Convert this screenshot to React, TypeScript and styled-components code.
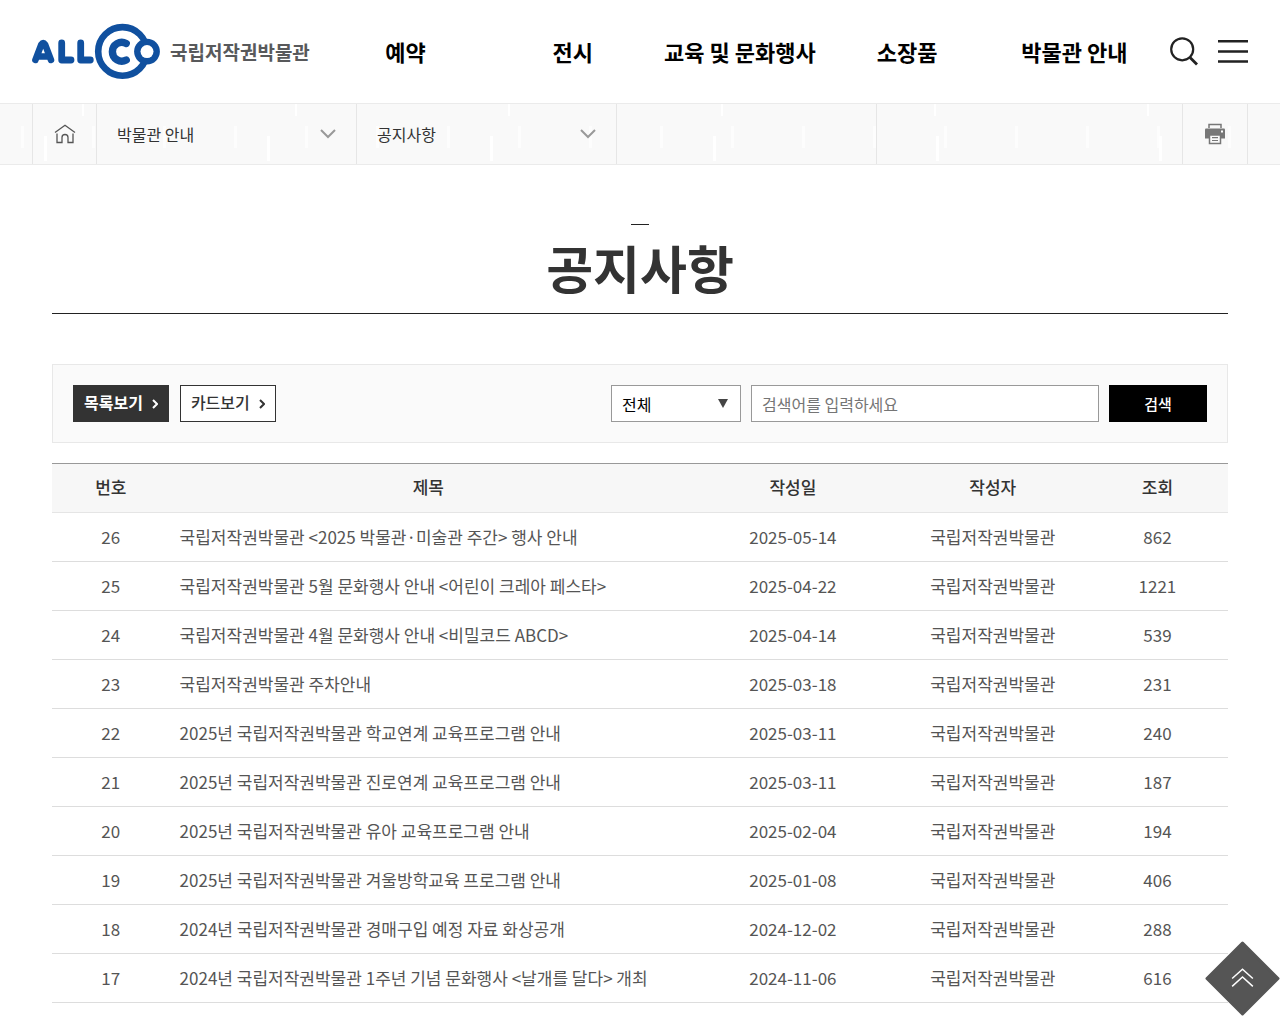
import React from "react";
import styled, { createGlobalStyle, css } from "styled-components";

const GlobalStyle = createGlobalStyle`
  *, *::before, *::after { box-sizing: border-box; }
  body {
    margin: 0;
    background: #fff;
    color: #333;
    font-family: "Noto Sans CJK KR", "Noto Sans", sans-serif;
    font-size: 16px;
    line-height: 24px;
  }
  a { color: inherit; text-decoration: none; }
  button, input, select { font: inherit; border-radius: 0; margin: 0; }
  button { cursor: pointer; }
`;

const Header = styled.header`
  display: flex;
  align-items: center;
  height: 103px;
  padding: 0 32px;
`;

const LogoLink = styled.a`
  display: flex;
  align-items: center;
  gap: 10px;
  flex: none;
  color: #58595b;
  font-size: 19px;
  font-weight: 700;
  white-space: nowrap;
`;

const Nav = styled.nav`
  flex: 1;
  margin: 0 12px;
  padding-bottom: 2px;
`;

const NavList = styled.ul`
  display: grid;
  grid-template-columns: repeat(5, 1fr);
  margin: 0;
  padding: 0;
  list-style: none;
  text-align: center;
`;

const NavLink = styled.a`
  color: #000;
  font-size: 22px;
  font-weight: 700;
  line-height: 32px;
  white-space: nowrap;
`;

const Tools = styled.div`
  display: flex;
  align-items: center;
  gap: 20px;
`;

const IconButton = styled.button`
  display: flex;
  padding: 0;
  border: 0;
  background: none;
  color: #222;
`;

const PathBar = styled.nav`
  display: flex;
  height: 62px;
  padding: 0 32px;
  border: solid #ebebeb;
  border-width: 1px 0;
  background:
    linear-gradient(90deg, transparent 82px, #fff 82px 84px, transparent 84px) 0 0 / 213px 12px repeat-x,
    linear-gradient(90deg, transparent 44px, #fff 44px 47px, transparent 47px) 0 32px / 223px 25px repeat-x,
    linear-gradient(90deg, transparent 21px, #fdfdfd 21px 24px, transparent 24px) 0 22px / 71px 22px repeat-x,
    #f9f9f9;
`;

const PathCell = styled.div<{ $kind: "icon" | "menu" | "rest" }>`
  display: flex;
  align-items: center;
  border-left: 1px solid #e6e6e6;
  ${({ $kind }) =>
    $kind === "icon"
      ? css`flex: 0 0 64px; justify-content: center;`
      : $kind === "menu"
        ? css`flex: 0 1 260px;`
        : css`flex: 1;`}
`;

const PrintCell = styled(PathCell)`
  flex-basis: 66px;
  border-right: 1px solid #e6e6e6;
`;

const PathButton = styled.button`
  display: flex;
  align-items: center;
  justify-content: space-between;
  width: 100%;
  padding: 0 20px;
  border: 0;
  background: none;
  color: #333;
`;

const HomeIcon = styled.svg`
  display: block;
`;

const Main = styled.main`
  padding: 59px 52px 20px;
`;

const TitleBlock = styled.div`
  display: flex;
  flex-direction: column;
  align-items: center;
  padding-bottom: 8px;
  border-bottom: 1px solid #222;

  &::before {
    content: "";
    width: 18px;
    height: 1px;
    margin-bottom: 4px;
    background: #222;
  }
`;

const Title = styled.h1`
  margin: 0;
  font-size: 51px;
  font-weight: 700;
  line-height: 76px;
`;

const Toolbar = styled.div`
  display: flex;
  justify-content: space-between;
  gap: 20px;
  margin: 50px 0 20px;
  padding: 20px;
  border: 1px solid #e8e8e8;
  background: #fafafa;
`;

const ViewGroup = styled.div`
  display: flex;
  gap: 11px;
`;

const ViewButton = styled.button<{ $active?: boolean }>`
  display: flex;
  align-items: center;
  gap: 9px;
  height: 37px;
  padding: 0 10px 4px;
  border: 1px solid #333;
  background: ${({ $active }) => ($active ? "#333" : "#fff")};
  color: ${({ $active }) => ($active ? "#fff" : "#333")};
  font-weight: ${({ $active }) => ($active ? 700 : 500)};
  white-space: nowrap;

  svg { margin-top: 4px; }
`;

const SearchForm = styled.form`
  display: flex;
  flex: 0 1 596px;
  gap: 10px;
`;

const SelectBox = styled.div`
  position: relative;
  flex: 0 0 130px;

  &::after {
    content: "";
    position: absolute;
    top: 14px;
    right: 13px;
    border: solid transparent;
    border-width: 9px 5px 0;
    border-top-color: #444;
    pointer-events: none;
  }
`;

const Select = styled.select`
  width: 100%;
  height: 37px;
  padding: 0 10px;
  border: 1px solid #999;
  background: #fff;
  color: #000;
  appearance: none;
`;

const SearchInput = styled.input`
  flex: 1;
  min-width: 0;
  height: 37px;
  padding: 0 10px;
  border: 1px solid #999;
  background: #fff;

  &::placeholder { color: #757575; }
`;

const SubmitButton = styled.button`
  flex: 0 0 98px;
  height: 37px;
  padding: 0;
  border: 0;
  background: #000;
  color: #fff;
  font-size: 15px;
  font-weight: 500;
`;

const Table = styled.table`
  width: 100%;
  border-collapse: separate;
  border-spacing: 0;
  border-top: 1px solid #999;
  table-layout: fixed;
  font-size: 17px;
  line-height: 24px;
  text-align: center;
`;

const Th = styled.th<{ $width: string }>`
  width: ${({ $width }) => $width};
  height: 49px;
  padding: 0 0 2px;
  border-bottom: 1px solid #e5e5e5;
  background: #f7f7f7;
  font-weight: 500;
`;

const Td = styled.td<{ $left?: boolean }>`
  height: 49px;
  padding: 0 10px;
  border-bottom: 1px solid #ddd;
  color: #555;
  text-align: ${({ $left }) => ($left ? "left" : "center")};
`;

const TopButton = styled.button`
  position: fixed;
  right: 0;
  bottom: 8px;
  display: flex;
  padding: 0;
  border: 0;
  background: none;
`;

const menus = ["예약", "전시", "교육 및 문화행사", "소장품", "박물관 안내"];

const columns = [
  ["번호", "10%"],
  ["제목", "44%"],
  ["작성일", "18%"],
  ["작성자", "16%"],
  ["조회", "12%"],
];

const author = "국립저작권박물관";

const notices: [number, string, string, number][] = [
  [26, "국립저작권박물관 <2025 박물관·미술관 주간> 행사 안내", "2025-05-14", 862],
  [25, "국립저작권박물관 5월 문화행사 안내 <어린이 크레아 페스타>", "2025-04-22", 1221],
  [24, "국립저작권박물관 4월 문화행사 안내 <비밀코드 ABCD>", "2025-04-14", 539],
  [23, "국립저작권박물관 주차안내", "2025-03-18", 231],
  [22, "2025년 국립저작권박물관 학교연계 교육프로그램 안내", "2025-03-11", 240],
  [21, "2025년 국립저작권박물관 진로연계 교육프로그램 안내", "2025-03-11", 187],
  [20, "2025년 국립저작권박물관 유아 교육프로그램 안내", "2025-02-04", 194],
  [19, "2025년 국립저작권박물관 겨울방학교육 프로그램 안내", "2025-01-08", 406],
  [18, "2024년 국립저작권박물관 경매구입 예정 자료 화상공개", "2024-12-02", 288],
  [17, "2024년 국립저작권박물관 1주년 기념 문화행사 <날개를 달다> 개최", "2024-11-06", 616],
];

const LogoMark = () => (
  <svg width="128" height="57" viewBox="32 23 128 57" fill="none" stroke="#10509f" strokeLinecap="round" strokeLinejoin="round" aria-hidden="true">
    <path d="M35.400 60 L41.300 44.500 Q43.200 41.500 45.100 44.500 L51 60 M40 56.500 H47" strokeWidth="6.500" />
    <path d="M61.700 43 V60 H71" strokeWidth="6.800" />
    <path d="M80.700 43 V60 H90.300" strokeWidth="6.800" />
    <circle cx="122.500" cy="51.400" r="24.300" strokeWidth="6.600" />
    <circle cx="147" cy="51.600" r="12.900" fill="#10509f" stroke="none" />
    <circle cx="147" cy="51.600" r="6.500" fill="#fff" stroke="none" />
    <path d="M126.200 43.400 A9.400 9.400 0 1 0 126.200 60" strokeWidth="7.400" />
  </svg>
);

const Chevron = () => (
  <svg width="16" height="10" viewBox="0 0 16 10" fill="none" stroke="#999" strokeWidth="2" aria-hidden="true">
    <path d="M1 1 L8 8 L15 1" />
  </svg>
);

const Arrow = () => (
  <svg width="6" height="10" viewBox="0 0 6 10" fill="none" stroke="currentColor" strokeWidth="2" aria-hidden="true">
    <path d="M1 1 L5 5 L1 9" />
  </svg>
);

export default function App() {
  return (
    <>
      <GlobalStyle />
      <Header>
        <LogoLink href="#">
          <LogoMark />
          국립저작권박물관
        </LogoLink>
        <Nav>
          <NavList>
            {menus.map((name) => (
              <li key={name}>
                <NavLink href="#">{name}</NavLink>
              </li>
            ))}
          </NavList>
        </Nav>
        <Tools>
          <IconButton aria-label="통합검색">
            <svg width="28" height="29" viewBox="0 0 28 29" fill="none" stroke="currentColor" aria-hidden="true">
              <circle cx="12.200" cy="12.300" r="11" strokeWidth="2.200" />
              <path d="M20 20.500 L27 27.500" strokeWidth="2.800" />
            </svg>
          </IconButton>
          <IconButton aria-label="전체메뉴">
            <svg width="30" height="23" viewBox="0 0 30 23" stroke="currentColor" strokeWidth="2.600" aria-hidden="true">
              <path d="M0 1.300 H30 M0 11.500 H30 M0 21.500 H30" />
            </svg>
          </IconButton>
        </Tools>
      </Header>

      <PathBar>
        <PathCell $kind="icon">
          <a href="#" aria-label="홈">
            <HomeIcon width="22" height="20" viewBox="0 0 22 20" fill="none" stroke="#555" strokeWidth="1.300" aria-hidden="true">
              <path d="M1 8.500 L11 1.200 L21 8.500 M3 9.500 V18.500 H8 V13.500 Q8 10.500 11 10.500 Q14 10.500 14 13.500 V18.500 H19 V9.500" />
            </HomeIcon>
          </a>
        </PathCell>
        <PathCell $kind="menu">
          <PathButton>박물관 안내<Chevron /></PathButton>
        </PathCell>
        <PathCell $kind="menu">
          <PathButton>공지사항<Chevron /></PathButton>
        </PathCell>
        <PathCell $kind="menu" />
        <PathCell $kind="rest" />
        <PrintCell $kind="icon">
          <IconButton aria-label="인쇄">
            <svg width="22" height="22" viewBox="0 0 22 22" fill="none" aria-hidden="true">
              <path d="M5 5 V1.500 H17 V5" stroke="#777" strokeWidth="1.500" />
              <path d="M2 5.500 H20 Q21 5.500 21 6.500 V15.500 H1 V6.500 Q1 5.500 2 5.500 Z" fill="#777" />
              <rect x="5.500" y="12" width="11" height="8.500" fill="#f9f9f9" stroke="#777" strokeWidth="1.500" />
              <path d="M8 14.700 H14 M8 17.500 H14" stroke="#777" strokeWidth="1.200" />
              <rect x="17" y="7.500" width="2" height="2" fill="#fff" />
            </svg>
          </IconButton>
        </PrintCell>
      </PathBar>

      <Main>
        <TitleBlock>
          <Title>공지사항</Title>
        </TitleBlock>

        <Toolbar>
          <ViewGroup>
            <ViewButton $active>목록보기<Arrow /></ViewButton>
            <ViewButton>카드보기<Arrow /></ViewButton>
          </ViewGroup>
          <SearchForm onSubmit={(e) => e.preventDefault()}>
            <SelectBox>
              <Select aria-label="검색 구분">
                <option>전체</option>
              </Select>
            </SelectBox>
            <SearchInput type="text" aria-label="검색어" placeholder="검색어를 입력하세요" />
            <SubmitButton type="submit">검색</SubmitButton>
          </SearchForm>
        </Toolbar>

        <Table>
          <thead>
            <tr>
              {columns.map(([name, width]) => (
                <Th key={name} $width={width} scope="col">{name}</Th>
              ))}
            </tr>
          </thead>
          <tbody>
            {notices.map(([no, title, date, views]) => (
              <tr key={no}>
                <Td>{no}</Td>
                <Td $left><a href="#">{title}</a></Td>
                <Td>{date}</Td>
                <Td>{author}</Td>
                <Td>{views}</Td>
              </tr>
            ))}
          </tbody>
        </Table>
      </Main>

      <TopButton aria-label="맨 위로">
        <svg width="75" height="75" viewBox="0 0 76 76" fill="none" aria-hidden="true">
          <path d="M38 2 L74 38 L38 74 L2 38 Z" fill="#555" stroke="#555" strokeWidth="3" strokeLinejoin="round" />
          <path d="M27.500 38 L38 28.500 L48.500 38 M27.500 46 L38 36.500 L48.500 46" stroke="#fff" strokeWidth="1.500" />
        </svg>
      </TopButton>
    </>
  );
}
